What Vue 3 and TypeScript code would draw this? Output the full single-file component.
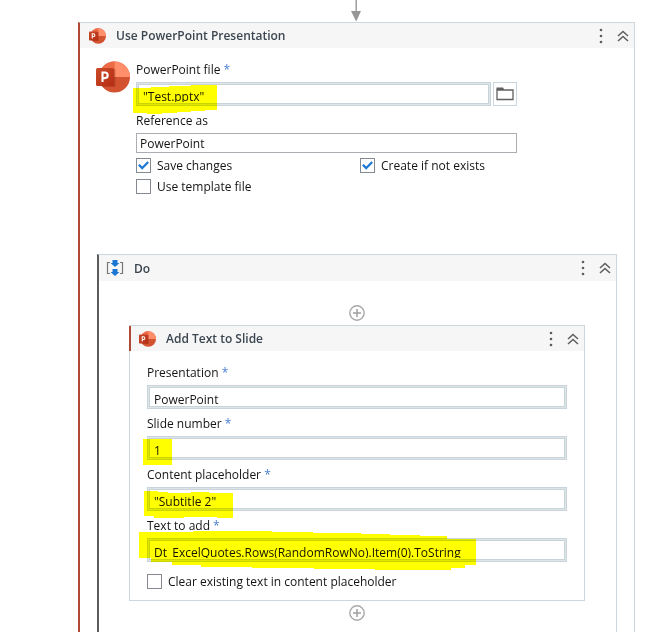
<script setup lang="ts">
import { reactive } from 'vue'

interface Field {
  id: string
  label: string
  value: string
  mark?: { left: string; width: number; height: number; points: string }
}

const settings = reactive({
  file: '"Test.pptx"',
  reference: 'PowerPoint',
  save: true,
  create: true,
  template: false,
  clear: false,
})

const fields = reactive<Field[]>([
  { id: 'presentation', label: 'Presentation', value: 'PowerPoint' },
  {
    id: 'slide-number',
    label: 'Slide number',
    value: '1',
    mark: { left: 'near', width: 29, height: 27, points: '0,0 29,0 29,26 0,26' },
  },
  {
    id: 'placeholder',
    label: 'Content placeholder',
    value: '"Subtitle 2"',
    mark: {
      left: 'near',
      width: 90,
      height: 29,
      points: '1,1 15,1 15,2 25,2 25,3 48,3 48,2 66,2 66,3 90,3 90,28 74,28 74,27 41,27 41,28 11,28 11,26 1,26',
    },
  },
  {
    id: 'text',
    label: 'Text to add',
    value: 'Dt_ExcelQuotes.Rows(RandomRowNo).Item(0).ToString',
    mark: {
      left: 'wide',
      width: 338,
      height: 40,
      points:
        '0,1 21,1 21,1 54,1 54,0 133,0 133,1 174,1 174,2 222,2 222,3 251,3 251,4 281,4 281,5 308,5 308,8 337,8 337,34 326,34 326,37 312,37 312,39 236,39 236,38 175,38 175,37 113,37 113,36 62,36 62,34 33,34 33,31 12,31 12,27 0,27',
    },
  },
])
</script>

<template>
  <svg class="symbols" aria-hidden="true">
    <defs>
      <linearGradient id="tile" x1="0" y1="0" x2="1" y2="1">
        <stop offset="0" stop-color="#ca4c28" />
        <stop offset="1" stop-color="#b52c14" />
      </linearGradient>
      <clipPath id="disc"><circle cx="18.5" cy="16" r="15.5" /></clipPath>
      <symbol id="ppt" viewBox="0 0 34 32">
        <g clip-path="url(#disc)">
          <rect x="3" y="0" width="31" height="32" fill="#d35230" />
          <rect x="3" y="0" width="15.5" height="16" fill="#ed6c47" />
          <rect x="18.5" y="0" width="16" height="16" fill="#ff8f6b" />
          <rect x="3" y="8" width="16.5" height="18" fill="#7a1d0c" opacity=".3" />
        </g>
        <rect x="0" y="7" width="18" height="18" rx="1.5" fill="url(#tile)" />
        <path d="M6.500 21V11.500h2.400a2.500 2.500 0 0 1 0 5.600H6.500" fill="none" stroke="#fff" stroke-width="2.1" />
      </symbol>
      <symbol id="more" viewBox="0 0 4 16">
        <circle cx="2" cy="2" r="1.3" /><circle cx="2" cy="8" r="1.3" /><circle cx="2" cy="14" r="1.3" />
      </symbol>
      <symbol id="collapse" viewBox="0 0 12 12">
        <path d="M1 6 6 1.5 11 6M1 11 6 6.5 11 11" fill="none" stroke="#606060" stroke-width="1.6" />
      </symbol>
      <symbol id="plus" viewBox="0 0 16 16">
        <circle cx="8" cy="8" r="7.2" fill="none" stroke="#a9a9a9" stroke-width="1.4" />
        <path d="M8 4v8M4 8h8" stroke="#a0a0a0" stroke-width="1.5" />
      </symbol>
    </defs>
  </svg>

  <main class="canvas">
    <svg class="arrow" viewBox="0 0 10 22"><path d="M4.5 0h1.4v11H10L5.2 21.5 0 11h4.5z" fill="#969696" /></svg>

    <section class="card outer">
      <header class="bar">
        <svg class="logo"><use href="#ppt" /></svg>
        <h1>Use PowerPoint Presentation</h1>
        <button type="button" class="tool" aria-label="More"><svg class="more"><use href="#more" /></svg></button>
        <button type="button" class="tool" aria-label="Collapse"><svg class="collapse"><use href="#collapse" /></svg></button>
      </header>

      <div class="setup">
        <svg class="biglogo"><use href="#ppt" /></svg>
        <div class="form">
          <label class="caption" for="file">PowerPoint file <i>*</i></label>
          <div class="line">
            <div class="well">
              <div class="inner"><input id="file" v-model="settings.file" type="text" /></div>
              <svg class="mark near" width="85" height="30">
                <path d="M1 3H19V2H37V1H59V0H85V25H73V26H59V27H45V28H30V29H15V28H1Z" />
              </svg>
            </div>
            <button type="button" class="browse" aria-label="Browse">
              <svg width="18" height="14" viewBox="0 0 18 14">
                <path d="M1 12.500V3H17v9.500z" fill="none" stroke="#606060" stroke-width="1.300" />
                <path d="M.5.500h6.500l1.500 2.500h-8z" fill="#606060" />
              </svg>
            </button>
          </div>
          <label class="caption" for="reference">Reference as</label>
          <input id="reference" v-model="settings.reference" class="plain" type="text" />
          <div class="checks">
            <label class="check"><input v-model="settings.save" type="checkbox" />Save changes</label>
            <label class="check"><input v-model="settings.create" type="checkbox" />Create if not exists</label>
            <label class="check"><input v-model="settings.template" type="checkbox" />Use template file</label>
          </div>
        </div>
      </div>

      <section class="card body">
        <header class="bar tall">
          <svg class="sequence" viewBox="0 0 18 18">
            <path d="M4 3.500H1.500v11H4M14 3.500h2.500v11H14" fill="none" stroke="#777" stroke-width="1.200" />
            <path d="M6.500 1h5v3h2L9 8 4.500 4h2zM6.500 10h5v3h2L9 17 4.500 13h2z" fill="#1976d2" />
          </svg>
          <h2>Do</h2>
          <button type="button" class="tool" aria-label="More"><svg class="more"><use href="#more" /></svg></button>
          <button type="button" class="tool" aria-label="Collapse"><svg class="collapse"><use href="#collapse" /></svg></button>
        </header>

        <button type="button" class="add" aria-label="Add activity above"><svg><use href="#plus" /></svg></button>

        <section class="step">
          <header class="bar accent">
            <svg class="logo"><use href="#ppt" /></svg>
            <h3>Add Text to Slide</h3>
            <button type="button" class="tool" aria-label="More"><svg class="more"><use href="#more" /></svg></button>
            <button type="button" class="tool" aria-label="Collapse"><svg class="collapse"><use href="#collapse" /></svg></button>
          </header>
          <div class="fields">
            <template v-for="f in fields" :key="f.id">
              <label class="caption" :for="f.id">{{ f.label }} <i>*</i></label>
              <div class="well">
                <div class="inner"><input :id="f.id" v-model="f.value" type="text" /></div>
                <svg v-if="f.mark" class="mark" :class="f.mark.left" :width="f.mark.width" :height="f.mark.height">
                  <polygon :points="f.mark.points" />
                </svg>
              </div>
            </template>
            <label class="check"><input v-model="settings.clear" type="checkbox" />Clear existing text in content placeholder</label>
          </div>
        </section>

        <button type="button" class="add" aria-label="Add activity below"><svg><use href="#plus" /></svg></button>
      </section>
    </section>
  </main>
</template>

<style>
body {
  margin: 0;
  background: #fff;
}
</style>

<style scoped>
* {
  box-sizing: border-box;
}
.symbols {
  position: absolute;
  width: 0;
  height: 0;
}
.canvas {
  display: flex;
  flex-direction: column;
  min-height: 100vh;
  padding: 0 36px 0 78px;
  font: 12px/27px 'Open Sans', 'Noto Sans', sans-serif;
  color: #141414;
}
svg {
  display: block;
  flex: none;
}
button {
  padding: 0;
  border: 0;
  background: none;
}
input {
  margin: 0;
  font: inherit;
  color: inherit;
}
.arrow {
  align-self: center;
  width: 10px;
  height: 22px;
  margin-right: 1px;
}
.card {
  display: flex;
  flex: 1;
  flex-direction: column;
  border: 1px solid #ccd6dd;
  border-bottom: 0;
  border-left: 2px solid #b14a35;
}
.bar {
  display: flex;
  align-items: center;
  height: 25px;
  padding: 0 5px 0 9px;
  background: #f6f6f6;
}
.bar h1,
.bar h2,
.bar h3 {
  flex: 1;
  margin: 0 0 0 10px;
  font-size: 12px;
  font-weight: 600;
  color: #3c4650;
}
.logo {
  width: 17px;
  height: 16px;
}
.tool {
  display: grid;
  flex: none;
  place-items: center;
  height: 22px;
}
.tool + .tool {
  margin-left: 14px;
}
.more {
  width: 4px;
  height: 16px;
  fill: #5c5c5c;
}
.collapse {
  width: 12px;
  height: 12px;
}
.setup {
  display: flex;
  gap: 6px;
  padding: 7px 117px 60px 16px;
}
.biglogo {
  width: 34px;
  height: 32px;
  margin-top: 6px;
}
.form {
  flex: 1;
  min-width: 0;
}
.caption {
  display: block;
  padding-top: 2px;
  line-height: 25px;
}
.caption i {
  font-style: normal;
  color: #4a7fd0;
}
.line {
  display: flex;
  gap: 2px;
}
.well {
  position: relative;
  flex: 1;
  height: 24px;
  padding: 1px;
  border: 1px solid #c9d4dc;
  background: #dde5e8;
}
.inner {
  height: 20px;
  border: 1px solid #c9d4d9;
  background: #fff;
}
.inner input {
  display: block;
  width: 100%;
  height: 22px;
  padding: 0 4px;
  border: 0;
  background: transparent;
  clip-path: inset(0 0 5px 0);
  outline: 0;
}
.mark {
  position: absolute;
  top: 2px;
  left: -5px;
  fill: #ff0;
  mix-blend-mode: multiply;
  pointer-events: none;
}
.mark.wide {
  top: -8px;
  left: -9px;
}
.browse {
  display: grid;
  place-items: center;
  width: 24px;
  height: 24px;
  border: 1px solid #ccd6e0;
}
.plain {
  display: block;
  width: 100%;
  height: 20px;
  padding: 0 3px;
  border: 1px solid #abadb3;
  background: #fff;
}
.checks {
  display: grid;
  grid-template-columns: 224px 1fr;
  row-gap: 6px;
  padding-top: 5px;
}
.check {
  display: flex;
  align-items: center;
  gap: 6px;
  line-height: 15px;
}
.check input {
  display: grid;
  flex: none;
  place-items: center;
  width: 15px;
  height: 15px;
  border: 1px solid #858a91;
  background: #fff;
  appearance: none;
}
.check input:checked::before {
  content: '';
  width: 11px;
  height: 9px;
  background: #1e78d7;
  clip-path: polygon(0 50%, 16% 34%, 38% 60%, 86% 4%, 100% 20%, 38% 98%);
}
.body {
  margin: 0 17px;
  border-left-color: #5c5c5c;
}
.bar.tall {
  height: 26px;
  padding-left: 7px;
}
.sequence {
  width: 18px;
  height: 18px;
}
.add {
  align-self: center;
  width: 16px;
  height: 16px;
  margin-right: 1px;
}
.add svg {
  width: 16px;
  height: 16px;
}
.tall + .add {
  margin-top: 24px;
  margin-bottom: 4px;
}
.step {
  margin: 0 31px 4px 30px;
  border: 1px solid #ccd6dd;
}
.bar.accent {
  margin-left: -1px;
  padding-left: 8px;
  border-left: 2px solid #b14a35;
}
.fields {
  padding: 7px 17px 11px;
}
.fields .check {
  margin-top: 12px;
}
</style>
